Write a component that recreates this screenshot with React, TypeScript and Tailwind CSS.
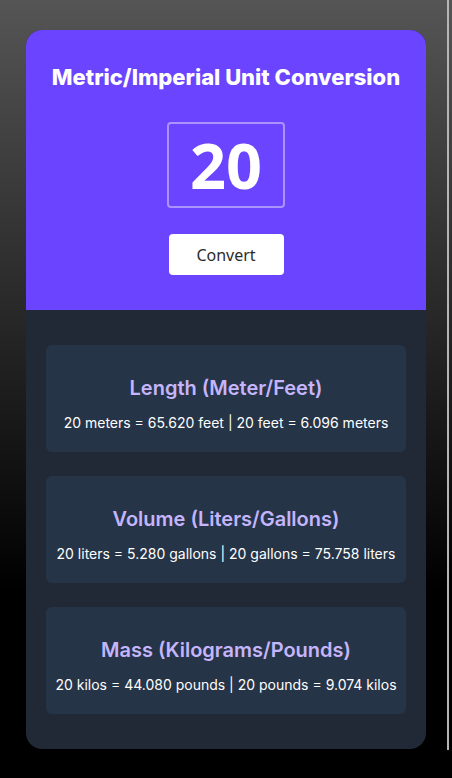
import React from 'react';

const conversions = [
  { title: 'Length (Meter/Feet)', text: '20 meters = 65.620 feet | 20 feet = 6.096 meters' },
  { title: 'Volume (Liters/Gallons)', text: '20 liters = 5.280 gallons | 20 gallons = 75.758 liters' },
  { title: 'Mass (Kilograms/Pounds)', text: '20 kilos = 44.080 pounds | 20 pounds = 9.074 kilos' },
];

export default function App() {
  return (
    <div className="min-h-screen bg-[linear-gradient(#555555_0%,#000000_76%)] pt-[30px] pb-[29px] font-['Inter',sans-serif]">
      <div className="mx-auto w-[400px] overflow-hidden rounded-2xl bg-[#212936]">
        {/* top panel */}
        <div className="flex h-[280px] flex-col items-center bg-[#6b44ff] pt-[32px]">
          <h1 className="text-[22px] font-extrabold leading-[30px] text-white">Metric/Imperial Unit Conversion</h1>
          <input
            defaultValue="20"
            className="mt-[30px] h-[86px] w-[118px] rounded border-2 border-[#a993ff] bg-transparent text-center font-['Open_Sans',sans-serif] text-[63px] font-bold text-white outline-none"
          />
          <button className="mt-[26px] h-[41px] w-[115px] rounded bg-white font-['Noto_Sans',sans-serif] text-[16px] text-[#2b2b2b]">
            Convert
          </button>
        </div>

        {/* results */}
        <div className="flex flex-col gap-6 px-5 pt-[35px] pb-[35px]">
          {conversions.map((c) => (
            <div key={c.title} className="flex h-[107px] flex-col items-center rounded-md bg-[#263447] pt-[29px]">
              <h2 className="text-[20px] font-semibold leading-[28px] text-[#c4b5fd]">{c.title}</h2>
              <p className="mt-[11px] text-[14px] leading-[20px] text-white">{c.text}</p>
            </div>
          ))}
        </div>
      </div>
      <div className="fixed right-[3px] top-0 h-[750px] w-[2px] bg-[#b5b5b5]" />
    </div>
  );
}
